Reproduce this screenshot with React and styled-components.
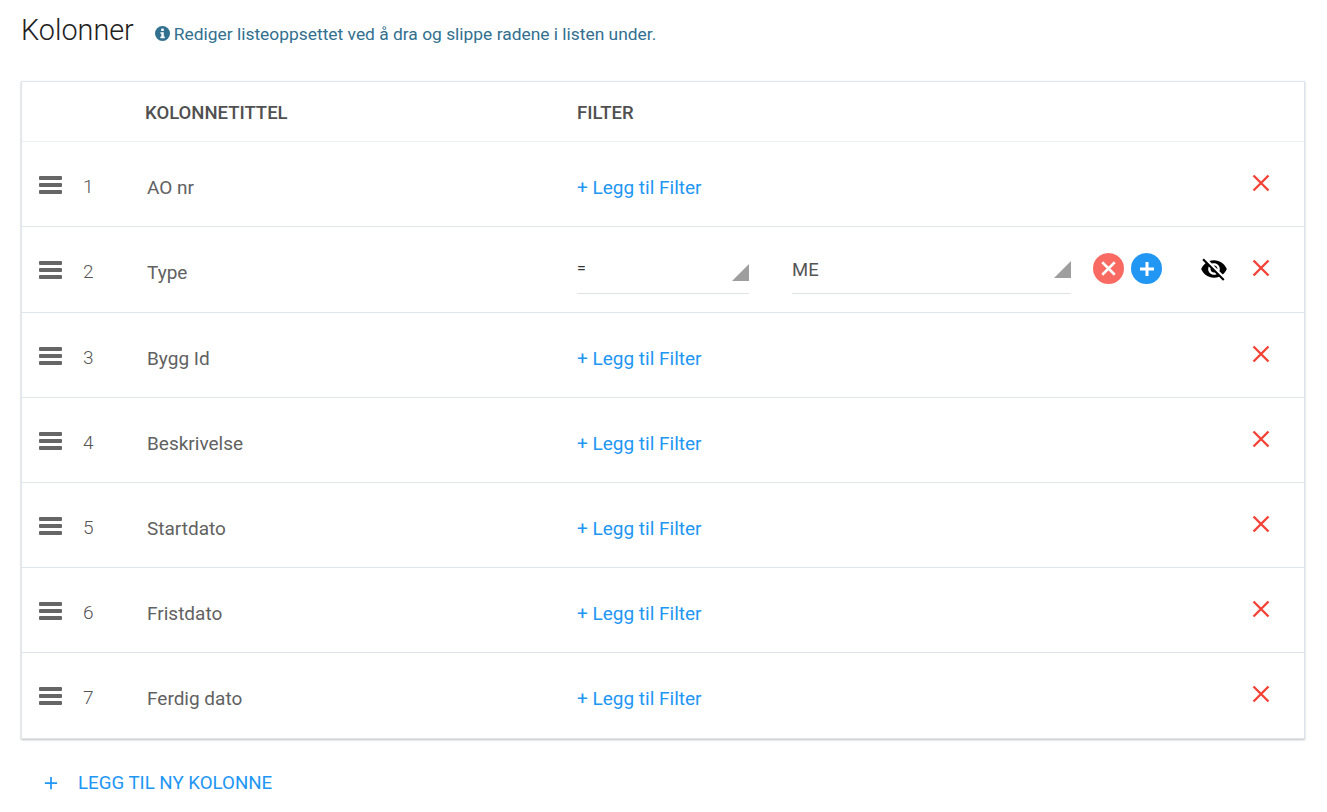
import styled, { createGlobalStyle } from "styled-components";
import { MdVisibilityOff } from "react-icons/md";

const GlobalStyle = createGlobalStyle`
    html, body {
        margin: 0;
        background: #fff;
        font-family: Roboto, "Liberation Sans", sans-serif;
    }
`
const Page = styled.div`
    width: 1327px;
    height: 812px;
    overflow: hidden;
    padding: 13px 22px 0 21px;
    box-sizing: border-box;
`
const TitleRow = styled.div`
    display: flex;
    align-items: center;
    height: 36px;
`
const Title = styled.h1`
    margin: -2px 0 0;
    font-size: 28.8px;
    font-weight: 300;
    color: #212121;
    line-height: 36px;
`
const Hint = styled.div`
    display: flex;
    align-items: center;
    gap: 4px;
    margin: 5px 0 0 21px;
    font-size: 17.4px;
    color: #31708f;
`
const Table = styled.div`
    margin-top: 32px;
    border: 1px solid #dde4ea;
    border-bottom: none;
    box-shadow: 0 1px 2px rgba(0, 0, 0, 0.25);
`
const HeadRow = styled.div`
    display: grid;
    grid-template-columns: 123px 432px 1fr;
    align-items: center;
    height: 60.2px;
    padding-top: 3px;
    box-sizing: border-box;
    border-bottom: 1px solid #eef1f4;
`
const HeadCell = styled.div`
    grid-column: ${(p) => p.$col};
    font-size: 18.5px;
    font-weight: 500;
    color: #505050;
`
const Row = styled.div`
    display: grid;
    grid-template-columns: 125px 430px 1fr 56px;
    align-items: center;
    height: 85.2px;
    box-sizing: border-box;
    border-bottom: 1px solid #dde6ec;
`
const Handle = styled.div`
    display: flex;
    align-items: center;
    padding-left: 17px;
    margin-top: 2px;
`
const DragIcon = styled.div`
    display: flex;
    flex-direction: column;
    gap: 3px;
    width: 23px;
    span {
        height: 4px;
        border-radius: 1px;
        background: #666;
    }
`
const Num = styled.div`
    margin-left: 21px;
    padding-top: 4px;
    font-size: 19px;
    font-weight: 300;
    line-height: 22px;
    color: #555;
`
const Name = styled.div`
    padding-top: 7px;
    font-size: 19px;
    color: #616161;
`
const AddFilter = styled.a`
    padding-top: 7px;
    font-size: 19px;
    color: #2196f3;
    cursor: pointer;
`
const FilterArea = styled.div`
    display: flex;
    align-items: center;
    margin-top: -1px;
`
const Select = styled.div`
    position: relative;
    width: ${(p) => p.$width}px;
    height: 50px;
    margin-right: ${(p) => p.$gap}px;
    box-sizing: border-box;
    border-bottom: 1px solid #dfe3e6;
    padding-top: 15px;
    font-size: ${(p) => p.$size}px;
    color: ${(p) => p.$color};
    &::after {
        content: "";
        position: absolute;
        right: 0;
        bottom: ${(p) => p.$arrow}px;
        border-style: solid;
        border-width: 0 0 17px 17px;
        border-color: transparent transparent #9e9e9e transparent;
    }
`
const RoundButton = styled.button`
    display: flex;
    align-items: center;
    justify-content: center;
    width: 31px;
    height: 31px;
    padding: 0;
    border: none;
    border-radius: 50%;
    background: ${(p) => p.$bg};
    margin-right: 7px;
`
const EyeWrap = styled.div`
    display: flex;
    margin-left: 31px;
    color: #000;
`
const Actions = styled.div`
    display: flex;
    justify-content: flex-start;
    padding-left: 4px;
    margin-top: -2px;
`
const AddColumn = styled.a`
    display: flex;
    align-items: center;
    gap: 20px;
    margin: 32px 0 0 23px;
    font-size: 18.7px;
    color: #2196f3;
    line-height: 24px;
`

const columns = ["AO nr", "Type", "Bygg Id", "Beskrivelse", "Startdato", "Fristdato", "Ferdig dato"];

const Cross = ({ size, width, color }) => (
    <svg width={size} height={size} viewBox="0 0 18 18">
        <path d="M1.5 1.5 L16.5 16.5 M16.5 1.5 L1.5 16.5" stroke={color} strokeWidth={width} fill="none" />
    </svg>
);

const Plus = ({ size, width, color }) => (
    <svg width={size} height={size} viewBox="0 0 16 16">
        <path d="M8 1 V15 M1 8 H15" stroke={color} strokeWidth={width} fill="none" />
    </svg>
);

const InfoIcon = () => (
    <svg width="15" height="15" viewBox="0 0 15 15">
        <circle cx="7.5" cy="7.5" r="7.5" fill="#31708f" />
        <rect x="6.2" y="2.6" width="2.6" height="2.4" fill="#fff" />
        <path d="M5.4 6.2 H8.8 V10.6 H9.8 V12.2 H5.4 V10.6 H6.4 V7.8 H5.4 Z" fill="#fff" />
    </svg>
);

const App = () => {
    return (
        <Page>
            <GlobalStyle />
            <TitleRow>
                <Title>Kolonner</Title>
                <Hint>
                    <InfoIcon />
                    Rediger listeoppsettet ved å dra og slippe radene i listen under.
                </Hint>
            </TitleRow>
            <Table>
                <HeadRow>
                    <HeadCell $col={2}>KOLONNETITTEL</HeadCell>
                    <HeadCell $col={3}>FILTER</HeadCell>
                </HeadRow>
                {columns.map((name, i) => (
                    <Row key={name}>
                        <Handle>
                            <DragIcon><span /><span /><span /></DragIcon>
                            <Num>{i + 1}</Num>
                        </Handle>
                        <Name>{name}</Name>
                        {name === "Type" ? (
                            <FilterArea>
                                <Select $width={172} $gap={43} $size={16} $color="#333" $arrow={12}>=</Select>
                                <Select $width={279} $gap={22} $size={18.5} $color="#555" $arrow={15}>ME</Select>
                                <RoundButton $bg="#f96a62"><Cross size={15} width={3} color="#fff" /></RoundButton>
                                <RoundButton $bg="#2196f3"><Plus size={16} width={3} color="#fff" /></RoundButton>
                                <EyeWrap><MdVisibilityOff size={28} /></EyeWrap>
                            </FilterArea>
                        ) : (
                            <AddFilter>+ Legg til Filter</AddFilter>
                        )}
                        <Actions><Cross size={18} width={2.4} color="#f44336" /></Actions>
                    </Row>
                ))}
            </Table>
            <AddColumn>
                <Plus size={14} width={2} color="#2196f3" />
                LEGG TIL NY KOLONNE
            </AddColumn>
        </Page>
    );
};

export default App;
